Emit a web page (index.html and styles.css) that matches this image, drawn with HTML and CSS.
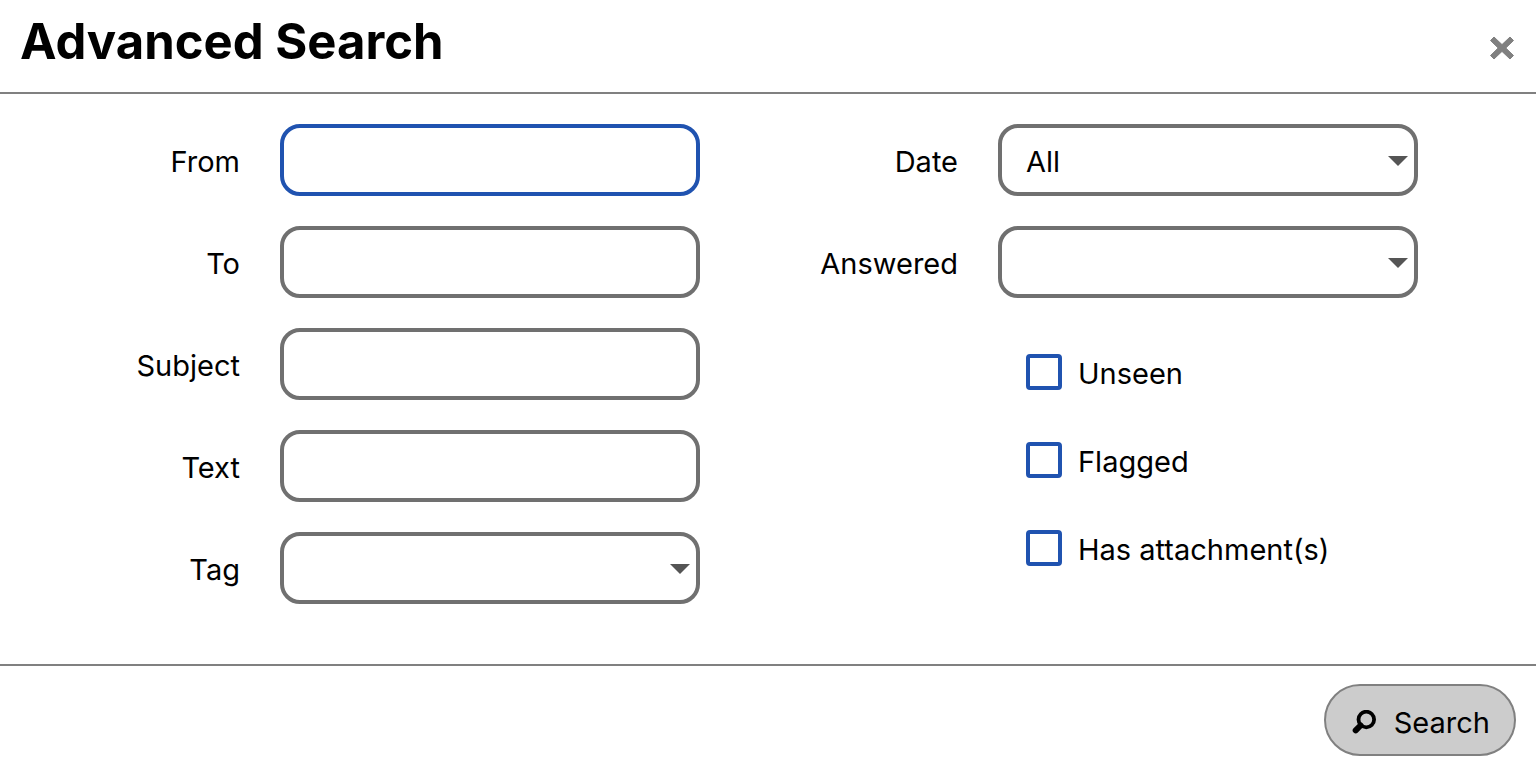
FILE: index.html
```html
<!DOCTYPE html>
<html lang="en">
<head>
  <meta charset="UTF-8" />
  <meta name="viewport" content="width=device-width, initial-scale=1.0"/>
  <title>Advanced Search</title>
  <link rel="stylesheet" href="styles.css">
</head>
<body>

<form class="dialog">
  <header class="dialog-header">
    <h1 class="title">Advanced Search</h1>
    <button type="button" class="close" aria-label="Close">
      <svg width="24" height="24" viewBox="0 0 24 24"><path d="M4 1 12 8.6 20 1 23.5 4.5 15.8 12 23.5 19.5 20 23 12 15.4 4 23 .5 19.5 8.2 12 .5 4.5z" fill="currentColor" stroke="currentColor" stroke-width="1" stroke-linejoin="round" /></svg>
    </button>
  </header>

  <div class="dialog-body">
    <div class="column">
      <div class="row">
        <label for="from">From</label>
        <input class="field active" type="text" id="from">
      </div>
      <div class="row">
        <label for="to">To</label>
        <input class="field" type="text" id="to">
      </div>
      <div class="row">
        <label for="subject">Subject</label>
        <input class="field" type="text" id="subject">
      </div>
      <div class="row">
        <label for="text">Text</label>
        <input class="field" type="text" id="text">
      </div>
      <div class="row">
        <label for="tag">Tag</label>
        <div class="select">
          <select class="field" id="tag"><option></option></select>
        </div>
      </div>
    </div>

    <div class="column">
      <div class="row">
        <label for="date">Date</label>
        <div class="select">
          <select class="field" id="date"><option>All</option></select>
        </div>
      </div>
      <div class="row">
        <label for="answered">Answered</label>
        <div class="select">
          <select class="field" id="answered"><option></option></select>
        </div>
      </div>
      <div class="checks">
        <div class="check"><input type="checkbox" id="unseen"><label for="unseen">Unseen</label></div>
        <div class="check"><input type="checkbox" id="flagged"><label for="flagged">Flagged</label></div>
        <div class="check"><input type="checkbox" id="attachment"><label for="attachment">Has attachment(s)</label></div>
      </div>
    </div>
  </div>

  <footer class="dialog-footer">
    <button type="submit" class="btn">
      <svg width="24" height="24" viewBox="0 0 24 24"><circle cx="14.3" cy="9.5" r="7.8" fill="none" stroke="currentColor" stroke-width="3.8" /><path d="M8.5 15.5 3.7 20.4" stroke="currentColor" stroke-width="6" stroke-linecap="round" /></svg>
      <span>Search</span>
    </button>
  </footer>
</form>

</body>
</html>
```
FILE: styles.css
```css
* { box-sizing: border-box; margin: 0; padding: 0; }

body {
  font-family: Inter, 'Liberation Sans', sans-serif;
  font-size: 29px;
  line-height: 36px;
  background-color: #fff;
  color: #000;
}

input, select, button {
  font: inherit;
  color: inherit;
}

label { padding-top: 4px; }

.dialog-header {
  display: flex;
  align-items: center;
  justify-content: space-between;
  padding: 10px 22px 18px 20px;
  border-bottom: 2px solid #808080;
}

.title {
  font-size: 49px;
  line-height: 64px;
  font-weight: 700;
}

.close {
  display: flex;
  padding-top: 12px;
  border: 0;
  background: none;
  color: #808080;
}

.dialog-body {
  display: grid;
  grid-template-columns: 1fr 1fr;
  column-gap: 18px;
  padding: 30px 118px 60px 0;
}

.column {
  display: flex;
  flex-direction: column;
  gap: 30px;
}

.row {
  display: flex;
  align-items: center;
}

.row > label {
  width: 40%;
  padding-right: 40px;
  text-align: right;
}

.row > .field,
.row > .select {
  width: 60%;
}

.field {
  display: block;
  width: 100%;
  height: 72px;
  padding: 4px 24px 0;
  border: 4px solid #707070;
  border-radius: 20px;
  background-color: #fff;
  appearance: none;
  outline: none;
}

.field.active { border-color: #2053b0; }

.select { position: relative; }

/* drop-down arrow */
.select::after {
  content: '';
  position: absolute;
  top: 32px;
  right: 10px;
  border: 10px solid transparent;
  border-top-color: #555;
  border-bottom: 0;
  pointer-events: none;
}

.checks { padding-left: calc(40% + 28px); }

.check {
  display: flex;
  align-items: center;
  gap: 16px;
  height: 88px;
}

.check input {
  width: 36px;
  height: 36px;
  border: 4px solid #2053b0;
  border-radius: 4px;
  appearance: none;
}

.dialog-footer {
  display: flex;
  justify-content: flex-end;
  padding: 18px 20px 6px;
  border-top: 2px solid #808080;
}

.btn {
  display: flex;
  align-items: center;
  gap: 18px;
  height: 72px;
  padding: 4px 24px 0 26px;
  border: 2px solid #808080;
  border-radius: 36px;
  background-color: #ccc;
}

.btn span { padding-top: 2px; }
```
